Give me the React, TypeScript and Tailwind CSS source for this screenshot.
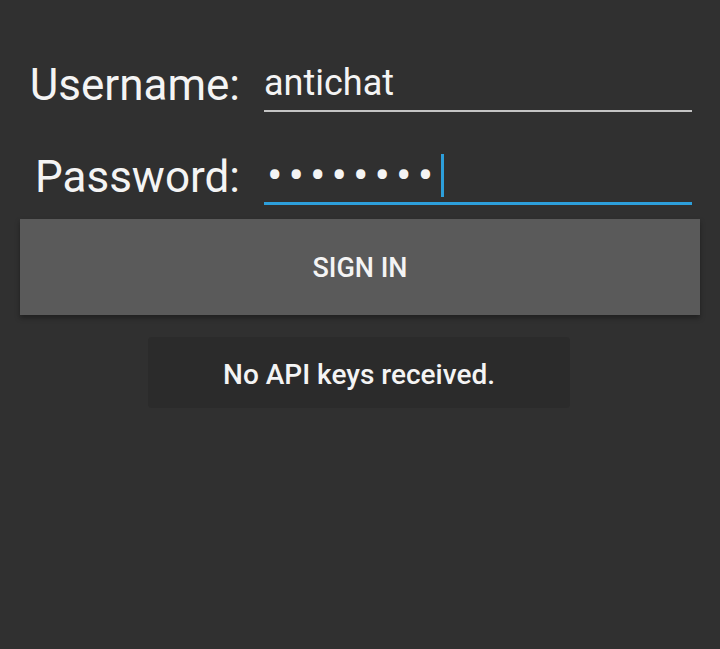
export default function App() {
  return (
    <div
      className="w-[720px] h-[649px] bg-[#303030] text-[#f4f4f4] overflow-hidden flex flex-col"
      style={{ fontFamily: 'Roboto, "Noto Sans", sans-serif' }}
    >
      {/* Username row */}
      <div className="flex mt-[63px]">
        <div className="w-[240px] text-right text-[44px] leading-[44px]">Username:</div>
        <div className="ml-[24px] w-[428px] flex flex-col">
          <div className="pt-[2px] text-[36px] leading-[36px]">antichat</div>
          <div className="mt-[9px] h-[2px] bg-[#c4c4c4]" />
        </div>
      </div>

      {/* Password row */}
      <div className="flex mt-[43px]">
        <div className="w-[240px] text-right text-[44px] leading-[44px]">Password:</div>
        <div className="ml-[24px] w-[428px] flex flex-col -mt-[1px]">
          <div className="h-[43px] flex items-center">
            <span className="pl-[3px] text-[46px] leading-[43px] tracking-[6px]">••••••••</span>
            <span className="ml-[2px] w-[3px] h-[43px] bg-[#2d9fdb]" />
          </div>
          <div className="mt-[5px] h-[3px] bg-[#2d9fdb]" />
        </div>
      </div>

      {/* Sign in button */}
      <div className="mx-[20px] mt-[14px] h-[96px] bg-[#5a5a5a] shadow-[0_3px_5px_rgba(0,0,0,0.35)] flex items-center justify-center">
        <span className="pt-[3px] text-[27px] font-medium leading-none">SIGN IN</span>
      </div>

      {/* Toast */}
      <div className="self-center ml-[-2px] mt-[22px] w-[422px] h-[71px] bg-[#2b2b2b] rounded-[4px] flex items-center justify-center">
        <span className="pt-[4px] text-[28px] font-medium leading-none">No API keys received.</span>
      </div>
    </div>
  );
}
